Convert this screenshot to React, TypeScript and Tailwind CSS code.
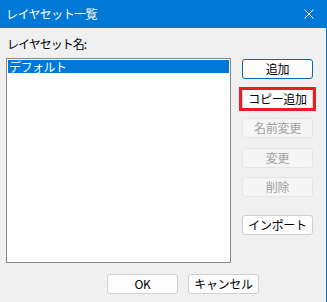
const FONT = { fontFamily: '"Noto Sans CJK JP", "Noto Sans", sans-serif' }

function Btn({ label, disabled, focused }: { label: string; disabled?: boolean; focused?: boolean }) {
  const base = 'w-[71px] h-[20px] rounded-[3px] border flex items-center justify-center text-[12px] leading-none tracking-[-0.3px]'
  const tone = disabled
    ? 'bg-[#f5f5f5] border-[#e5e5e5] text-[#a0a0a0]'
    : focused
      ? 'bg-[#fdfdfd] border-[#0067c0] text-black'
      : 'bg-[#fdfdfd] border-[#d0d0d0] text-black'
  return <div className={`${base} ${tone}`}>{label}</div>
}

export default function App() {
  return (
    <div className="w-[327px] h-[302px] bg-[#f0f0f0] border-r border-[#0078d7] overflow-hidden" style={FONT}>
      {/* title bar */}
      <div className="h-[28px] bg-[#0078d7] flex items-center justify-between pl-[6px] pr-[12px]">
        <span className="text-white text-[12px] leading-none tracking-[-0.6px]">レイヤセット一覧</span>
        <svg width="10" height="10" viewBox="0 0 10 10">
          <path d="M0.5 0.5L9.5 9.5M9.5 0.5L0.5 9.5" stroke="white" strokeWidth="1" />
        </svg>
      </div>

      <div className="flex">
        {/* list */}
        <div className="ml-[6px] w-[225px]">
          <div className="h-[30px] flex items-center pt-[2px] pl-[1px] text-[12px] text-black tracking-[-1px]">レイヤセット名:</div>
          <div className="h-[205px] bg-white border border-[#828790] p-[1px]">
            <div className="h-[13px] bg-[#0078d7] text-white text-[12px] leading-[13px] pl-[1px] tracking-[-0.5px]">デフォルト</div>
          </div>
        </div>

        {/* buttons */}
        <div className="ml-[11px] pt-[31px] flex flex-col">
          <Btn label="追加" focused />
          <div className="relative mt-[10px]">
            <Btn label="コピー追加" />
            <div className="absolute left-[-3px] top-[-2px] w-[77px] h-[24px] border-[3px] border-[#ed1c24]" />
          </div>
          <div className="mt-[9px]"><Btn label="名前変更" disabled /></div>
          <div className="mt-[10px]"><Btn label="変更" disabled /></div>
          <div className="mt-[9px]"><Btn label="削除" disabled /></div>
          <div className="mt-[18px]"><Btn label="インポート" /></div>
        </div>
      </div>

      {/* footer */}
      <div className="mt-[11px] ml-[107px] flex gap-[10px]">
        <Btn label="OK" />
        <Btn label="キャンセル" />
      </div>
    </div>
  )
}
